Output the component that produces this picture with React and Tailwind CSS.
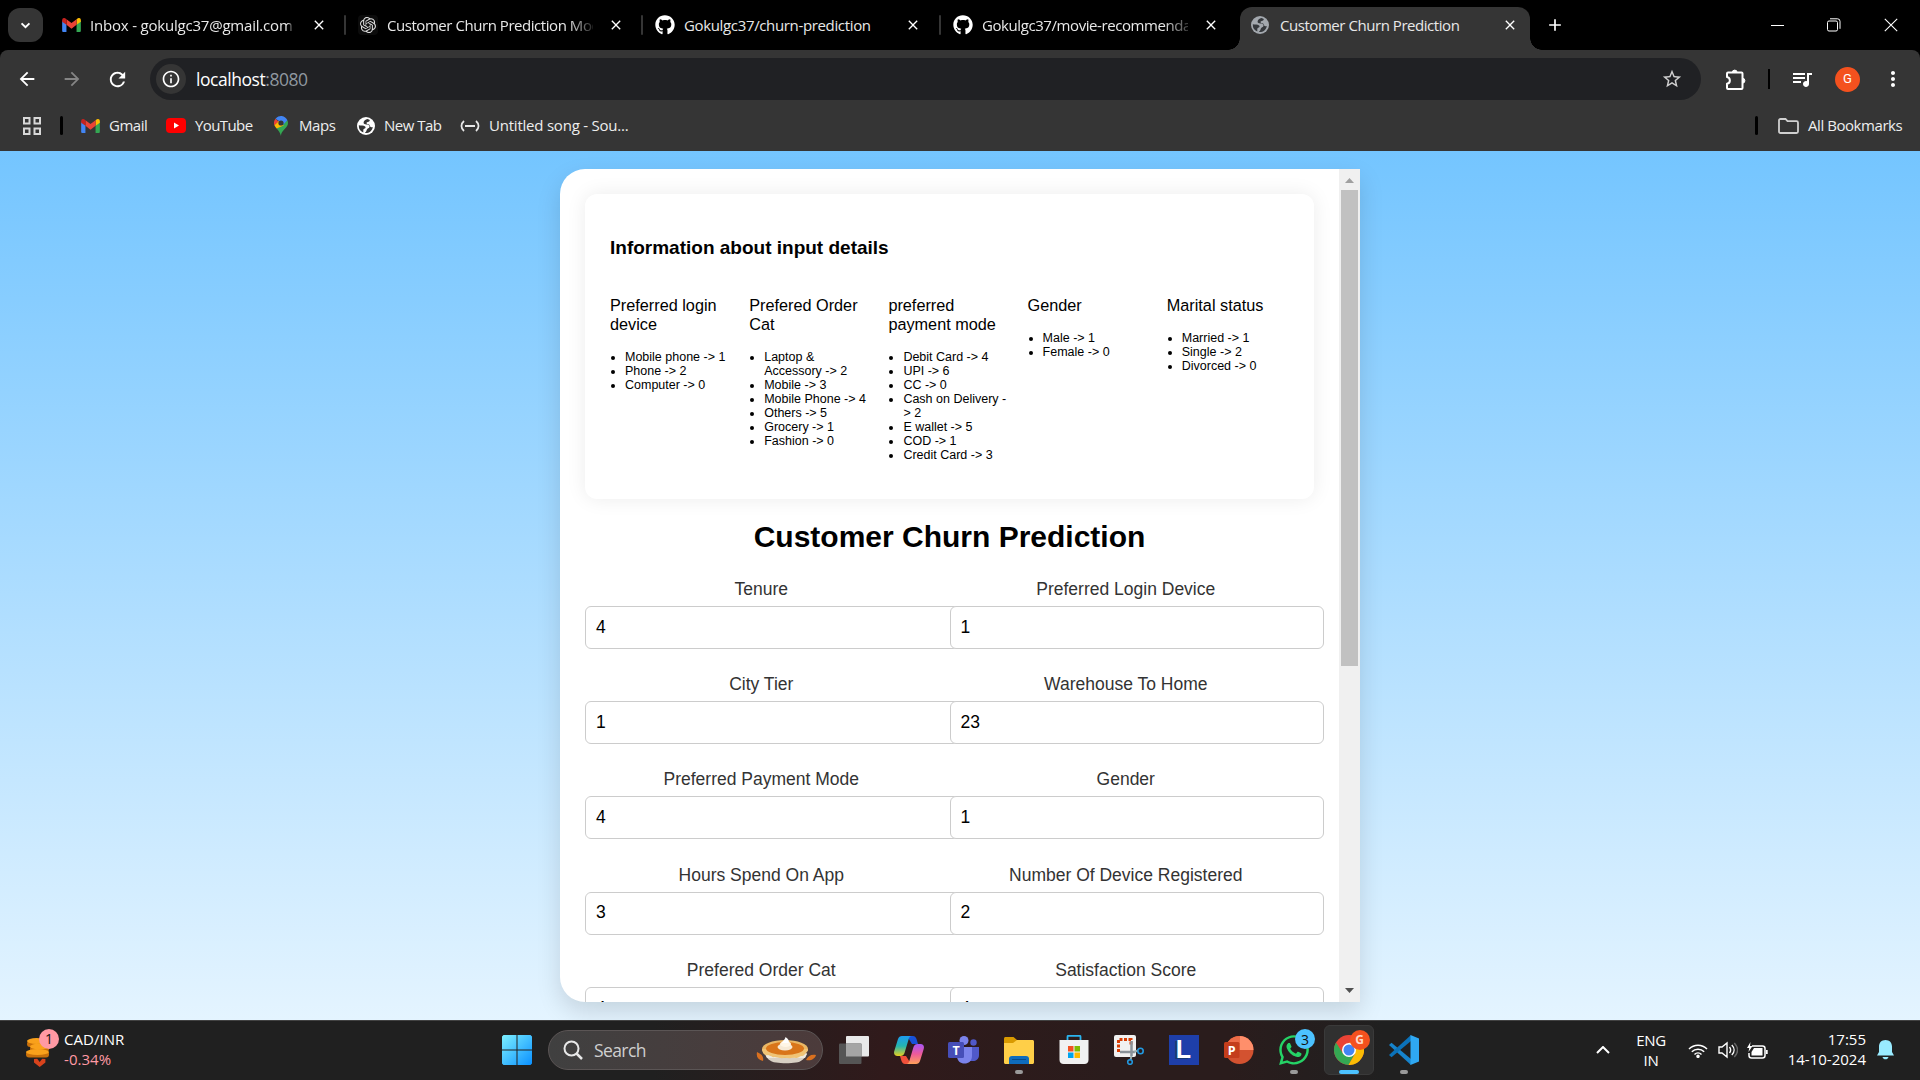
import React from "react";
import { SiOpenai } from "react-icons/si";
import { FaGithub, FaWhatsapp } from "react-icons/fa";
import { MdArrowBack, MdArrowForward, MdRefresh, MdInfoOutline, MdStarBorder, MdQueueMusic, MdMoreVert, MdClose, MdAdd } from "react-icons/md";

const UI = "font-['Open_Sans','Noto_Sans',sans-serif]";

function GmailIcon({ className }) {
  return (
    <svg viewBox="0 0 24 18" className={className}>
      <path d="M0 3v13.4C0 17.3.7 18 1.6 18H5.500V8.500z" fill="#4285f4" />
      <path d="M24 3v13.400c0 .9-.7 1.600-1.600 1.600H18.500V8.500z" fill="#34a853" />
      <path d="M18.500 1.600v7.200L24 4.700V2.500C24 .3 21.500-.8 19.700.6z" fill="#fbbc04" />
      <path d="M5.500 8.800V1.600L12 6.500l6.500-4.900v7.200L12 13.700z" fill="#ea4335" />
      <path d="M0 2.500v2.200l5.500 4.100V1.600L4.300.6C2.500-.8 0 .3 0 2.500z" fill="#c5221f" />
    </svg>
  );
}

function GlobeIcon({ className, land }) {
  return (
    <svg viewBox="0 0 20 20" className={className}>
      <circle cx="10" cy="10" r="10" fill="currentColor" />
      <path d="M11.500 2.200C9.500 3 7.500 4 7.300 6c-.1 1.600 1.500 2.200 3 2.200 1.600.1 3.400.2 3.600 2.200.2 1.900-1.400 2-2.500 2.900-1 .9-.6 2.200-1.700 3.300-.4.500-.9.900-1 1.200 4.300.6 8.200-2.500 8.900-6.800-1 .5-2.300.6-3-.4-.6-1-.4-2-1.500-2.500-1.100-.4-2.300-.1-2.500-1.200-.1-1 1.200-1.200 2.200-1.500 1-.4 1.600-1 1.300-2-.3-.6-1.500-1-2.600-1.200z" fill={land} />
      <path d="M2 9.200c2 .3 5.500.2 7 1.300.9.800.5 2-.4 2.400-.9.500-1.500.6-1.600 1.700v2.600A8.200 8.200 0 0 1 2 9.200z" fill={land} />
    </svg>
  );
}

function Tab({ icon, title, className, textClass, divider }) {
  return (
    <div className={"flex h-full shrink-0 items-center " + className}>
      <span className="flex w-5 shrink-0 justify-center">{icon}</span>
      <span className={"ml-[9px] w-[206px] shrink-0 whitespace-nowrap text-[15px] text-[#e8e8e8] " + textClass}>{title}</span>
      <MdClose className="ml-[15px] size-4 shrink-0 text-white" />
      {divider && <span className="ml-auto h-5 w-[2px] rounded bg-[#353535]" />}
    </div>
  );
}

function TabStrip() {
  return (
    <div className="flex h-[50px] items-center bg-black">
      <div className="ml-2 flex h-[34px] w-[35px] items-center justify-center rounded-xl bg-[#353535]">
        <svg viewBox="0 0 12 8" className="h-[7px] w-[11px]"><path d="M1.500 1.500 6 6l4.500-4.500" fill="none" stroke="#fff" strokeWidth="2.200" /></svg>
      </div>
      <div className="ml-[3px] flex h-full items-center">
        <Tab className="w-[300px] pl-[15px]" textClass="tracking-[-0.200px] [mask-image:linear-gradient(to_right,black_96%,#0004_98%)]" icon={<GmailIcon className="h-[14px] w-[19px]" />} title="Inbox - gokulgc37@gmail.com" divider />
        <Tab className="w-[297px] pl-[12px]" textClass="tracking-[-0.450px] [mask-image:linear-gradient(to_right,black_88%,transparent_102%)]" icon={<span className="flex size-5 items-center justify-center rounded bg-[#0c0c0c] text-[#ddd]"><SiOpenai className="size-4" /></span>} title="Customer Churn Prediction Mod" divider />
        <Tab className="w-[298px] pl-[12px]" textClass="tracking-[-0.350px]" icon={<FaGithub className="size-5 text-white" />} title="Gokulgc37/churn-prediction" divider />
        <Tab className="w-[299px] pl-[12px]" textClass="tracking-[-0.420px] [mask-image:linear-gradient(to_right,black_88%,transparent_104%)]" icon={<FaGithub className="size-5 text-white" />} title="Gokulgc37/movie-recommenda" />
      </div>
      <div className="relative flex h-[43px] w-[290px] items-center self-end rounded-t-xl bg-[#353535] pb-[7px] pl-[11px]">
        <span className="absolute bottom-0 -left-3 size-3 bg-[radial-gradient(circle_at_0_0,transparent_11.500px,#353535_12px)]" />
        <span className="absolute -right-3 bottom-0 size-3 bg-[radial-gradient(circle_at_100%_0,transparent_11.500px,#353535_12px)]" />
        <GlobeIcon className="size-[18px] text-[#a3a8ae]" land="#35383c" />
        <span className="ml-[11px] w-[206px] whitespace-nowrap text-[15px] tracking-[-0.450px] text-[#e8e8e8]">Customer Churn Prediction</span>
        <MdClose className="ml-[16px] size-4 text-white" />
      </div>
      <MdAdd className="ml-[15px] size-5 text-white" />
      <div className="ml-auto flex items-center gap-[43px] pr-[22px]">
        <span className="h-px w-[13px] bg-white" />
        <svg viewBox="0 0 14 14" className="size-[14px]" fill="none" stroke="#fff"><rect x=".5" y="3" width="10" height="10" rx="1.500" /><path d="M3 .8h7.500a2.500 2.500 0 0 1 2.500 2.500v7.500" /></svg>
        <svg viewBox="0 0 14 14" className="size-[14px]" stroke="#fff" strokeWidth="1.100"><path d="M.8.8l12.400 12.400M13.200.8.8 13.200" /></svg>
      </div>
    </div>
  );
}

function AddressBar() {
  return (
    <div className="flex h-[58px] items-center pl-4 text-white">
      <MdArrowBack className="size-[22px]" />
      <MdArrowForward className="ml-[23px] size-[22px] text-[#858585]" />
      <MdRefresh className="ml-[23px] size-[23px]" />
      <div className="ml-[21px] flex h-[42px] w-[1551px] items-center rounded-full bg-[#202124] pl-[6px]">
        <span className="flex size-[30px] items-center justify-center rounded-full bg-[#353535]"><MdInfoOutline className="size-5" /></span>
        <span className="ml-[10px] text-[17.500px] tracking-[-0.450px]">localhost<span className="text-[#9098a0]">:8080</span></span>
        <MdStarBorder className="mr-[18px] ml-auto size-[22px] text-[#d0d0d0]" />
      </div>
      <svg viewBox="0 0 22 22" className="ml-[24px] size-[22px]" fill="none" stroke="#fff" strokeWidth="2" strokeLinejoin="round">
        <path d="M3 4.500h13.500c.6 0 1 .4 1 1V20c0 .6-.4 1-1 1H3c-.6 0-1-.4-1-1v-4.200c3.800-.8 3.800-6 0-6.800V5.500c0-.6.4-1 1-1z" />
        <path d="M7.300 4.500a2.400 2.400 0 0 1 4.800 0zM17.500 10.300a2.400 2.400 0 0 1 0 4.800z" fill="#fff" strokeWidth="1" />
      </svg>
      <span className="ml-[21px] h-5 w-[2px] bg-black" />
      <MdQueueMusic className="ml-[20px] size-[24px]" />
      <span className="ml-[21px] flex size-[25px] items-center justify-center rounded-full bg-[#f4511e] font-['Roboto',sans-serif] text-[13px]">G</span>
      <MdMoreVert className="ml-[21px] size-6" />
    </div>
  );
}

function Bookmark({ icon, children, className }) {
  return (
    <span className={"flex shrink-0 items-center gap-[9px] whitespace-nowrap text-[15px] text-[#eee] " + className}>{icon}{children}</span>
  );
}

function BookmarkBar() {
  return (
    <div className="flex h-[43px] items-center pb-[8px] pl-[23px]">
      <svg viewBox="0 0 18 18" className="size-[18px]" fill="none" stroke="#d8d8d8" strokeWidth="2"><path d="M1 1h5.500v5.500H1zM11.500 1H17v5.500h-5.500zM1 11.500h5.500V17H1zM11.500 11.500H17V17h-5.500z" /></svg>
      <span className="ml-[19px] h-[19px] w-[3px] rounded bg-black" />
      <Bookmark className="ml-[18px] w-[66px] tracking-[-0.500px]" icon={<GmailIcon className="h-[14px] w-[19px] shrink-0" />}>Gmail</Bookmark>
      <Bookmark className="ml-[19px] w-[86px] tracking-[-0.600px]" icon={<svg viewBox="0 0 20 15" className="h-[15px] w-5 shrink-0"><rect width="20" height="15" rx="4" fill="#f00" /><path d="M8 4.500v6l5-3z" fill="#fff" /></svg>}>YouTube</Bookmark>
      <Bookmark className="ml-[22px] w-[62px] tracking-[-0.400px]" icon={
        <svg viewBox="0 0 14 20" className="mr-[2px] h-5 w-[14px] shrink-0">
          <path d="M7 20c0-3 1.200-4.300 3.400-6.700C12.500 11 14 9.500 14 7c0-1-.2-2-.6-2.800L2.600 12.500C4.800 15 6.300 17 7 20z" fill="#34a853" />
          <path d="M2.600 12.500 9.700 9.500 4.500 5 .3 9c.5 1.300 1.300 2.400 2.300 3.500z" fill="#fbbc04" />
          <path d="M1.500 2.700A7 7 0 0 0 .3 9.200l4.200-3.700z" fill="#ea4335" />
          <path d="M1.500 2.700A7 7 0 0 1 13.400 4.200L9.200 8.700 5 5z" fill="#4285f4" />
          <circle cx="7" cy="7" r="2.600" fill="#353535" />
        </svg>}>Maps</Bookmark>
      <Bookmark className="ml-[21px] w-[84px] tracking-[-0.500px]" icon={<GlobeIcon className="size-[18px] shrink-0 text-white" land="#353535" />}>New Tab</Bookmark>
      <Bookmark className="ml-[19px] tracking-[-0.220px]" icon={<svg viewBox="0 0 20 12" className="h-3 w-5 shrink-0" fill="none" stroke="#e8e8e8" strokeWidth="1.800"><path d="M4 1C.6 4 .6 8 4 11M16 1c3.400 3 3.400 7 0 10M5 6h10" /></svg>}>Untitled song - Sou...</Bookmark>
      <span className="ml-auto h-[19px] w-[3px] rounded bg-black" />
      <Bookmark className="ml-[20px] w-[142px] tracking-[-0.440px]" icon={<svg viewBox="0 0 21 16" className="h-4 w-[21px] shrink-0" fill="none" stroke="#d0d0d0" strokeWidth="1.800"><path d="M1 2.500C1 1.600 1.600 1 2.500 1h5l2 2.200h9c.9 0 1.500.6 1.500 1.500v8.800c0 .9-.6 1.500-1.500 1.500h-16C1.600 15 1 14.400 1 13.500z" /></svg>}>All Bookmarks</Bookmark>
    </div>
  );
}

const info = [
  { head: ["Preferred login", "device"], items: ["Mobile phone -> 1", "Phone -> 2", "Computer -> 0"] },
  { head: ["Prefered Order", "Cat"], items: ["Laptop & Accessory -> 2", "Mobile -> 3", "Mobile Phone -> 4", "Others -> 5", "Grocery -> 1", "Fashion -> 0"] },
  { head: ["preferred", "payment mode"], items: ["Debit Card -> 4", "UPI -> 6", "CC -> 0", "Cash on Delivery -> 2", "E wallet -> 5", "COD -> 1", "Credit Card -> 3"] },
  { head: ["Gender"], items: ["Male -> 1", "Female -> 0"] },
  { head: ["Marital status"], items: ["Married -> 1", "Single -> 2", "Divorced -> 0"] },
];

const fields = [
  ["Tenure", "4"], ["Preferred Login Device", "1"],
  ["City Tier", "1"], ["Warehouse To Home", "23"],
  ["Preferred Payment Mode", "4"], ["Gender", "1"],
  ["Hours Spend On App", "3"], ["Number Of Device Registered", "2"],
  ["Prefered Order Cat", "4"], ["Satisfaction Score", "4"],
];

function FormCard() {
  return (
    <div className="flex h-[833px] w-[800px] overflow-hidden rounded-l-[25px] bg-white font-['Liberation_Sans',Arial,sans-serif] text-black shadow-[0_10px_25px_rgba(0,0,0,0.13)]">
      <div className="flex-1 pt-[25px] pl-[25px]">
        <section className="h-[305px] w-[729px] rounded-xl bg-white pt-[42px] pl-[25px] shadow-[0_0_20px_rgba(0,0,0,0.08)]">
          <h3 className="text-[19px] leading-6 font-bold">Information about input details</h3>
          <div className="mt-[36px] flex gap-[17px]">
            {info.map((col) => (
              <div key={col.head[0]} className="w-[122.200px] shrink-0">
                <p className="text-[16.250px] leading-[19px]">{col.head.map((line) => <span key={line} className="block">{line}</span>)}</p>
                <ul className="mt-[16px] list-disc pl-[15px] text-[12.500px] leading-[14px]">
                  {col.items.map((item) => <li key={item}>{item}</li>)}
                </ul>
              </div>
            ))}
          </div>
        </section>
        <h1 className="mt-[20px] w-[729px] text-center text-[30px] leading-9 font-bold">Customer Churn Prediction</h1>
        <div className="mt-[24px] grid w-[729px] grid-cols-2">
          {fields.map(([label, value]) => (
            <div key={label} className="h-[95.200px]">
              <div className="pr-[12px] text-center text-[17.500px] leading-5 text-[#333]">{label}</div>
              <div className="mt-[7px] flex h-[43px] w-[374px] items-center rounded-md border border-[#ccc] bg-white pb-px pl-[10px] text-[17.500px]">{value}</div>
            </div>
          ))}
        </div>
      </div>
      <div className="flex w-[21px] flex-col items-center bg-[#f0f0f0]">
        <svg viewBox="0 0 9 5" className="mt-[9px] h-[5px] w-[9px]"><path d="M0 5 4.500 0 9 5z" fill="#a0a0a0" /></svg>
        <div className="mt-[7px] h-[476px] w-[17px] bg-[#c1c1c1]" />
        <svg viewBox="0 0 9 5" className="mt-auto mb-[9px] h-[5px] w-[9px]"><path d="M0 0 4.500 5 9 0z" fill="#505050" /></svg>
      </div>
    </div>
  );
}

function TaskbarApp({ children, dot }) {
  return (
    <div className="relative flex h-[50px] w-[55px] shrink-0 items-center justify-center">
      {children}
      {dot && <span className="absolute bottom-[1px] h-[4px] w-2 rounded-full bg-[#9a9a9a]" />}
    </div>
  );
}

function Pie() {
  return (
    <svg viewBox="0 0 60 28" className="h-7 w-[60px]">
      <path d="M1 16c5 2 7 5 6 9-5-1-7-4-6-9zM60 19c-5-1-8 1-10 5 5 1 9-1 10-5z" fill="#d9701f" />
      <path d="M9 17h42c-2 6-6 9-11 9.500-6 1-14 1-20 0C14 26 10 22 9 17z" fill="#d8d0c4" />
      <path d="M9 18h42l-2 4H11z" fill="#efe9dd" />
      <ellipse cx="29" cy="13" rx="23" ry="9" fill="#e9b765" />
      <path d="M6 13c0 4 3 7 6 6s3 3 7 2 5 2 8 1 5 1 8 0 5 1 8-1 4 0 6-3 3-2 3-5" fill="#f0c476" />
      <ellipse cx="29" cy="12.500" rx="19" ry="6.500" fill="#d9751a" />
      <ellipse cx="29" cy="11" rx="7.500" ry="3.500" fill="#f7ead6" />
      <ellipse cx="29.500" cy="8" rx="5.500" ry="3" fill="#fff6e6" />
      <path d="M26 7c1-3 3-3 3.500-6 3 2 4 4 3 6z" fill="#fff" />
    </svg>
  );
}

function Taskbar() {
  return (
    <div className={"flex h-[60px] items-center border-t border-[#424242] bg-[linear-gradient(to_right,#202020_34%,#301a1b_46%,#2a1c1c_58%,#2a1c1c_64%,#202020_72%)] pb-px text-white " + UI}>
      <div className="flex w-[502px] items-center">
        <svg viewBox="0 0 34 38" className="-mt-1 ml-[25px] h-[38px] w-[34px]">
          <g fill="#c9700a"><rect x="2" y="12" width="19" height="6" rx="3" /><rect x="5" y="17" width="19" height="6" rx="3" /><rect x="1" y="22" width="23" height="6.500" rx="3" /></g>
          <g fill="#f9a11b"><ellipse cx="11.500" cy="12" rx="9.500" ry="3" /><ellipse cx="14.500" cy="17.500" rx="9.500" ry="3" /><ellipse cx="12.500" cy="23" rx="11.500" ry="3" /></g>
          <path d="m9 30 3.200-.2L14.700 33l2.500-3.200 3.200.2v3.400L14.700 38 9 33.400z" fill="#d8431c" />
          <circle cx="24" cy="10" r="10" fill="#ff99a4" />
          <text x="24" y="15" textAnchor="middle" fontSize="14" fill="#111">1</text>
        </svg>
        <div className="-mt-[3px] ml-[5px] text-[15px] leading-5 tracking-[0.050px]"><div>CAD/INR</div><div className="text-[#ff99a4]">-0.34%</div></div>
      </div>
      <svg viewBox="0 0 30 30" className="size-[30px]">
        <defs><linearGradient id="win" x1="0" y1="0" x2="1" y2="1"><stop stopColor="#7df0ff" /><stop offset="1" stopColor="#0a90ff" /></linearGradient></defs>
        <path d="M1.500 0h13v14.500H0v-13zM15.500 0h13L30 1.500v13H15.500zM0 15.500h14.500V30h-13L0 28.500zM15.500 15.500H30v13L28.500 30h-13z" fill="url(#win)" />
      </svg>
      <div className="ml-[16px] flex h-10 w-[275px] items-center rounded-full border border-[#5b5555] bg-[linear-gradient(to_right,#404040,#4c3b3b)] pl-[14px]">
        <svg viewBox="0 0 20 20" className="size-5" fill="none" stroke="#e8e8e8" strokeWidth="2"><circle cx="8.500" cy="8.500" r="7" /><path d="m13.500 13.500 5.500 5.500" strokeWidth="2.500" /></svg>
        <span className="ml-[11px] text-[17.500px] tracking-[-0.600px] text-[#cfcfcf]">Search</span>
        <span className="mr-[6px] ml-auto"><Pie /></span>
      </div>
      <div className="ml-[3px] flex">
        <TaskbarApp>
          <svg viewBox="0 0 30 28" className="h-7 w-[30px]"><rect x="7" width="23" height="20.500" rx="1" fill="#e9e9e9" /><rect y="7.500" width="22.500" height="20.500" rx="1" fill="#555" /><path d="M7 7.500h15.500v13H7z" fill="#a5a5a5" /></svg>
        </TaskbarApp>
        <TaskbarApp>
          <svg viewBox="0 0 30 28" className="h-7 w-[30px]">
            <defs>
              <linearGradient id="cp1" x1="0" y1="0" x2="0" y2="1"><stop stopColor="#1d9bf0" /><stop offset=".5" stopColor="#24b5b0" /><stop offset="1" stopColor="#e7d01f" /></linearGradient>
              <linearGradient id="cp2" x1="0" y1="0" x2="0" y2="1"><stop stopColor="#a855f7" /><stop offset=".5" stopColor="#ee5a9a" /><stop offset="1" stopColor="#ffa15a" /></linearGradient>
            </defs>
            <path d="M13 0h6c2 0 3 1.500 3.500 3l1.500 5h-6z" fill="#1851d8" />
            <path d="M17 28h-6c-2 0-3-1.500-3.500-3L6 20h6z" fill="#f0503a" />
            <path d="M8 0h10c-2 0-2.700 1.200-3.300 3L10.500 17c-.7 2-2 3-4 3H3.500c-3 0-4-2.400-3.200-5L4 3c.7-2 2-3 4-3z" fill="url(#cp1)" />
            <path d="M22 28H12c2 0 2.700-1.200 3.300-3l4.200-14c.7-2 2-3 4-3h3c3 0 4 2.400 3.200 5L26 25c-.7 2-2 3-4 3z" fill="url(#cp2)" />
          </svg>
        </TaskbarApp>
        <TaskbarApp>
          <svg viewBox="0 0 31 28" className="h-7 w-[31px]"><circle cx="16" cy="4.500" r="4.500" fill="#7b83eb" /><circle cx="25.500" cy="6.500" r="3.200" fill="#5059c9" /><path d="M21 11h10v8c0 4-3 6-6 6h-4z" fill="#5059c9" /><path d="M9 11h15v9c0 5-3.500 7.500-7.500 7.500S9 25 9 20z" fill="#7b83eb" /><rect y="6" width="16" height="16" rx="1.500" fill="#464eb8" /><text x="8" y="18.500" fontSize="12.500" fontWeight="700" textAnchor="middle" fill="#fff">T</text></svg>
        </TaskbarApp>
        <TaskbarApp dot>
          <svg viewBox="0 0 30 27" className="h-[27px] w-[30px]"><path d="M0 1.500C0 .7.700 0 1.500 0h8l3.500 3v5H0z" fill="#d99a00" /><path d="M9 6 13 3h15.500c.8 0 1.500.7 1.500 1.500v21c0 .8-.7 1.500-1.500 1.500h-27C.7 27 0 26.300 0 25.500V6z" fill="#ffcf48" /><path d="M5 27v-5c0-1.700 1-3 3-3h14c2 0 3 1.300 3 3v5z" fill="#0f6cbd" /><path d="M8 22.500h14" stroke="#084b8a" /></svg>
        </TaskbarApp>
        <TaskbarApp>
          <svg viewBox="0 0 30 30" className="size-[30px]"><path d="M8.500 6V1.800c0-.5.500-1 1-1h11c.5 0 1 .5 1 1V6" fill="none" stroke="#2bb5ef" strokeWidth="1.800" /><path d="M.5 5h29v20c0 2.500-1.800 4-4 4h-21c-2.200 0-4-1.500-4-4z" fill="#f1f1f1" /><path fill="#f25022" d="M9 11h5.500v5.500H9z" /><path fill="#7fba00" d="M15.500 11H21v5.500h-5.500z" /><path fill="#00a4ef" d="M9 17.500h5.500V23H9z" /><path fill="#ffb900" d="M15.500 17.500H21V23h-5.500z" /></svg>
        </TaskbarApp>
        <TaskbarApp>
          <svg viewBox="0 0 30 30" className="size-[30px]"><rect width="22" height="22" rx="2" fill="#f1f1f1" /><path d="M4.500 17V4.500H17v6" fill="none" stroke="#d83b01" strokeWidth="3" strokeDasharray="3 1.500" /><path d="M6 17h15M17.500 6v15" stroke="#8a9299" strokeWidth="2.500" /><path d="m20 17 4-1.500M17.500 21l-1 4" stroke="#9aa" strokeWidth="2" /><circle cx="26.500" cy="16" r="2.700" fill="none" stroke="#2299e0" strokeWidth="1.600" /><circle cx="16" cy="27" r="2.300" fill="none" stroke="#2299e0" strokeWidth="1.600" /></svg>
        </TaskbarApp>
        <TaskbarApp><span className="flex size-[30px] items-center justify-center bg-[#1e3faa] font-['Liberation_Sans',sans-serif] text-[25px] font-bold [text-shadow:-2px_1px_0_#163a70]">L</span></TaskbarApp>
        <TaskbarApp>
          <svg viewBox="0 0 30 28" className="h-7 w-[30px]"><circle cx="15.500" cy="14" r="14" fill="#d35230" /><path d="M15.500 0a14 14 0 0 1 14 14h-14z" fill="#ff8f6b" /><path d="M15.500 0v14h-14a14 14 0 0 1 14-14z" fill="#ed6c47" /><rect y="6" width="15.500" height="16" rx="1.500" fill="#c43e1c" /><text x="7.700" y="18.500" fontSize="12.500" fontWeight="700" textAnchor="middle" fill="#fff">P</text></svg>
        </TaskbarApp>
        <TaskbarApp dot>
          <FaWhatsapp className="size-[34px] text-[#25d366]" />
          <span className="absolute top-[4px] right-[6px] flex size-5 items-center justify-center rounded-full bg-[#4cc2ff] text-[14px] text-[#111]">3</span>
        </TaskbarApp>
        <TaskbarApp>
          <div className="relative flex size-[50px] items-center justify-center rounded-md border border-[#3a3a3a] bg-[#303030]">
            <svg viewBox="0 0 30 30" className="size-[30px]"><circle cx="15" cy="15" r="15" fill="#ea4335" /><path d="M2 7.500A15 15 0 0 0 14.500 30L21 18.500 9 18.500z" fill="#34a853" /><path d="M14.500 30A15 15 0 0 0 28 7.500H15l6.200 11z" fill="#fbbc04" /><circle cx="15" cy="15" r="7" fill="#fff" /><circle cx="15" cy="15" r="5.500" fill="#4285f4" /></svg>
            <span className="absolute top-[4px] right-[3px] flex size-5 items-center justify-center rounded-full bg-[#f4511e] text-[12px] font-bold text-[#ffd9c9]">G</span>
            <span className="absolute bottom-0 h-1 w-5 rounded-full bg-[#4cc2ff]" />
          </div>
        </TaskbarApp>
        <TaskbarApp dot>
          <svg viewBox="0 0 30 30" className="size-[30px]"><path d="m0 10 2.500-2.200L22 24v6z" fill="#1684cd" /><path d="m0 20 2.500 2.200L22 6V0z" fill="#0b72b9" /><path d="M21.500 0 30 3.500v23L21.500 30z" fill="#2fa8f2" /></svg>
        </TaskbarApp>
      </div>
      <div className="ml-auto flex items-center pr-[26px]">
        <svg viewBox="0 0 14 8" className="h-2 w-[14px]" fill="none" stroke="#fff" strokeWidth="2"><path d="m1 7 6-6 6 6" /></svg>
        <div className="-mt-px ml-[26px] w-[30px] text-center text-[15px] leading-5 tracking-[-0.300px]"><div>ENG</div><div>IN</div></div>
        <svg viewBox="0 0 20 15" className="ml-[22px] h-[15px] w-5" fill="none" stroke="#fff" strokeWidth="1.500"><path d="M1 6a12.700 12.700 0 0 1 18 0M3.800 8.800a8.800 8.800 0 0 1 12.400 0M6.500 11.500a5 5 0 0 1 7 0" /><circle cx="10" cy="13.300" r="1" fill="#fff" /></svg>
        <svg viewBox="0 0 20 18" className="ml-[10px] h-[18px] w-5" fill="none" stroke="#fff" strokeWidth="1.400"><path d="M1 6h3l5-4v14l-5-4H1zM11.500 6c1.500 2 1.500 4 0 6M13.800 4c3 3 3 7 0 10" /><path d="M16.300 2c4.200 4.500 4.200 9.500 0 14" stroke="#666" /></svg>
        <svg viewBox="0 0 21 17" className="ml-[9px] h-[17px] w-[21px]"><path d="M5 4h10.500A2.500 2.500 0 0 1 18 6.500v7a2.500 2.500 0 0 1-2.500 2.500h-11A2.500 2.500 0 0 1 2 13.500V11" fill="none" stroke="#fff" strokeWidth="1.500" /><path d="M7 6h8.500v7.500H4.500V10zM19 8h1.700v4H19zM3.500 0 0 6h2.200L1.500 10l4-6H3z" fill="#fff" /></svg>
        <div className="-mt-[3px] ml-[18px] w-[80px] text-right text-[15px] leading-5 whitespace-nowrap"><div>17:55</div><div>14-10-2024</div></div>
        <svg viewBox="0 0 17 20" className="ml-[11px] h-5 w-[17px]"><path d="M8.500 0c4 0 6.500 2.800 6.500 6.500V12l2 3.500H0L2 12V6.500C2 2.800 4.500 0 8.500 0zM5.500 17h6c-.5 1.500-1.500 2.300-3 2.300s-2.500-.8-3-2.300z" fill="#99ebff" /></svg>
      </div>
    </div>
  );
}

export default function App() {
  return (
    <div className="flex h-[1080px] w-[1920px] flex-col overflow-hidden bg-black">
      <header className={UI}>
        <TabStrip />
        <div className="rounded-t-lg bg-[#353535]">
          <AddressBar />
          <BookmarkBar />
        </div>
      </header>
      <main className="flex h-[869px] justify-center bg-[linear-gradient(#74c5ff,#e4f4ff)] pt-[18px]">
        <FormCard />
      </main>
      <Taskbar />
    </div>
  );
}
